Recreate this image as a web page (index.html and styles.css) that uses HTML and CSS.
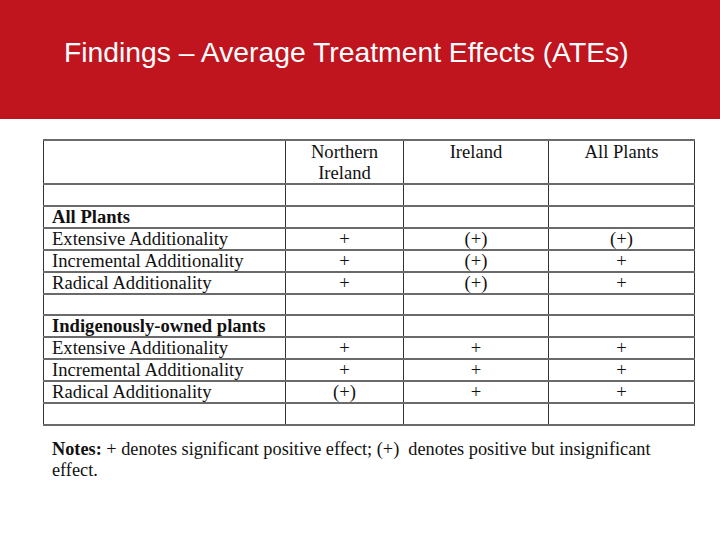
FILE: index.html
```html
<!DOCTYPE html>
<html>
<head>
<meta charset="utf-8">
<link rel="stylesheet" href="styles.css">
</head>
<body>
<header class="banner">
  <h1 class="title">Findings – Average Treatment Effects (ATEs)</h1>
</header>
<main class="content">
  <table class="ate">
    <colgroup>
      <col class="c-label"><col class="c-ni"><col class="c-ie"><col class="c-all">
    </colgroup>
    <tr class="head">
      <td></td><td>Northern<br>Ireland</td><td>Ireland</td><td>All Plants</td>
    </tr>
    <tr><td></td><td></td><td></td><td></td></tr>
    <tr><td class="grp">All Plants</td><td></td><td></td><td></td></tr>
    <tr><td>Extensive Additionality</td><td>+</td><td>(+)</td><td>(+)</td></tr>
    <tr><td>Incremental Additionality</td><td>+</td><td>(+)</td><td>+</td></tr>
    <tr><td>Radical Additionality</td><td>+</td><td>(+)</td><td>+</td></tr>
    <tr><td></td><td></td><td></td><td></td></tr>
    <tr><td class="grp">Indigenously-owned plants</td><td></td><td></td><td></td></tr>
    <tr><td>Extensive Additionality</td><td>+</td><td>+</td><td>+</td></tr>
    <tr><td>Incremental Additionality</td><td>+</td><td>+</td><td>+</td></tr>
    <tr><td>Radical Additionality</td><td>(+)</td><td>+</td><td>+</td></tr>
    <tr><td></td><td></td><td></td><td></td></tr>
  </table>
  <p class="notes"><b>Notes:</b> + denotes significant positive effect; (+)&nbsp; denotes positive but insignificant effect.</p>
</main>
</body>
</html>
```

FILE: styles.css
```css
html, body {
  margin: 0;
  padding: 0;
  background: #ffffff;
}
body {
  width: 720px;
  height: 540px;
  overflow: hidden;
  font-family: "Liberation Serif", "Times New Roman", serif;
  color: #111;
}
.banner {
  background: #c0151f;
  height: 119px;
  box-sizing: border-box;
  padding: 35px 0 0 64px;
}
.title {
  margin: 0;
  font-family: "Liberation Sans", Arial, sans-serif;
  font-weight: normal;
  font-size: 28.3px;
  line-height: 34px;
  color: #ffffff;
}
.content {
  padding: 20px 0 0 43px;
}
.ate {
  border-collapse: collapse;
  width: 651px;
  table-layout: fixed;
  font-size: 18.6px;
  line-height: 20px;
}
.c-label { width: 242px; }
.c-ni { width: 118px; }
.c-ie { width: 145px; }
.c-all { width: 146px; }
.ate td {
  border-left: 1px solid #333;
  border-right: 1px solid #333;
  border-top: 2px solid #6a6a6a;
  border-bottom: 2px solid #6a6a6a;
  height: 19.6px;
  padding: 0;
  text-align: center;
  vertical-align: middle;
  white-space: nowrap;
}
.ate td:first-child {
  text-align: left;
  padding-left: 8px;
}
.ate tr.head td {
  height: 39px;
  vertical-align: top;
  padding-top: 0;
  line-height: 21px;
}
.ate tr.head td:first-child { padding-left: 0; }
.ate td.grp { font-weight: bold; }
.notes {
  margin: 13px 0 0 9px;
  width: 620px;
  font-size: 18.3px;
  line-height: 21px;
}
.notes b { font-weight: bold; }
```
